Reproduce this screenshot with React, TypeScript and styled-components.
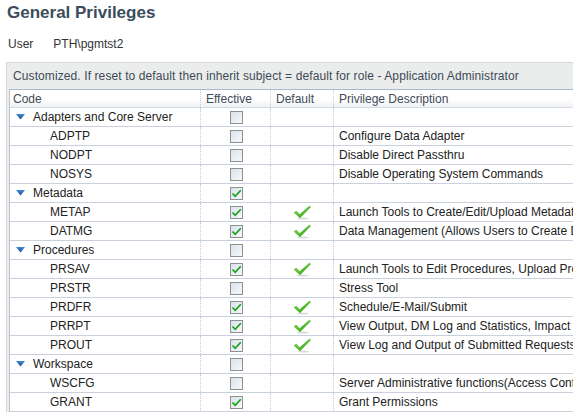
import styled, { createGlobalStyle } from "styled-components";

const GlobalStyle = createGlobalStyle`
  body {
    margin: 0;
    background: #ffffff;
    font-family: "Liberation Sans", Arial, sans-serif;
    color: #333333;
  }
`;

const Page = styled.div`
  width: 573px;
  height: 414px;
  overflow: hidden;
  position: relative;
`;

const Title = styled.h1`
  margin: 0;
  padding: 2px 0 0 7px;
  font-size: 17px;
  line-height: 22px;
  font-weight: bold;
  color: #3b4d5c;
`;

const UserLine = styled.div`
  display: flex;
  gap: 20px;
  margin-top: 13px;
  padding-left: 8px;
  font-size: 12px;
  line-height: 14px;
  color: #333;
`;

const Panel = styled.div`
  margin: 11px 0 0 6px;
  width: 620px;
  border: 1px solid #d3d7da;
  border-right: none;
  border-bottom: none;
  background: #ebedec;
  padding-left: 2px;
`;

const Caption = styled.div`
  height: 26px;
  line-height: 27px;
  padding-left: 4px;
  font-size: 12px;
  letter-spacing: 0.1px;
  color: #3d4a57;
`;

const Table = styled.div`
  background: #ffffff;
  border-top: 1px solid #a9b8cb;
  border-left: 1px solid #b9c3cf;
`;

const Row = styled.div<{ $head?: boolean }>`
  display: grid;
  grid-template-columns: 191px 70px 63px 1fr;
  height: ${(p) => (p.$head ? "17px" : "18px")};
  border-bottom: 1px solid ${(p) => (p.$head ? "#d5dbe3" : "#c8d1dc")};
  background: ${(p) =>
    p.$head ? "linear-gradient(#ffffff 0%, #ffffff 55%, #eef0f3 100%)" : "#fff"};
  font-size: 12px;
  color: ${(p) => (p.$head ? "#404b57" : "#222")};
`;

const Cell = styled.div<{ $center?: boolean; $indent?: number }>`
  display: flex;
  align-items: center;
  justify-content: ${(p) => (p.$center ? "center" : "flex-start")};
  padding-left: ${(p) => (p.$center ? 0 : p.$indent ?? 3)}px;
  border-right: 1px dotted #c4cbd8;
  white-space: nowrap;
  overflow: hidden;
  gap: 8px;
`;

const Box = styled.span`
  width: 11px;
  height: 11px;
  border: 1px solid #8e9090;
  background: linear-gradient(135deg, #d9e2ec 0%, #f7f9fb 100%);
  display: flex;
  align-items: center;
  justify-content: center;
  margin-left: 1px;
`;

const Arrow = () => (
  <svg width="9" height="6" viewBox="0 0 9 6">
    <defs>
      <linearGradient id="ag" x1="0" y1="0" x2="0" y2="1">
        <stop offset="0" stopColor="#3f8ad6" />
        <stop offset="1" stopColor="#1a4f99" />
      </linearGradient>
    </defs>
    <polygon points="0,0 9,0 4.5,5.5" fill="url(#ag)" />
  </svg>
);

const SmallCheck = () => (
  <svg width="11" height="11" viewBox="0 0 11 11">
    <path d="M1.5 5.5 L4.2 8.3 L9.8 2.2" fill="none" stroke="#19a019" strokeWidth="1.7" />
  </svg>
);

const BigCheck = () => (
  <svg width="19" height="15" viewBox="0 0 19 15">
    <defs>
      <linearGradient id="bg" x1="0" y1="0" x2="1" y2="1">
        <stop offset="0" stopColor="#8ee04a" />
        <stop offset="1" stopColor="#1e9e10" />
      </linearGradient>
    </defs>
    <ellipse cx="10" cy="13.6" rx="6" ry="1" fill="#d8dcd8" />
    <path
      d="M1 7.5 L3.2 6 L6.6 9.6 L16.5 1 L17.6 2 L7 13 Z"
      fill="url(#bg)"
      stroke="#3aa81a"
      strokeWidth="0.4"
    />
  </svg>
);

type Item = { code: string; eff: boolean; def: boolean; desc: string };
type Group = { name: string; eff: boolean; items: Item[] };

const groups: Group[] = [
  {
    name: "Adapters and Core Server",
    eff: false,
    items: [
      { code: "ADPTP", eff: false, def: false, desc: "Configure Data Adapter" },
      { code: "NODPT", eff: false, def: false, desc: "Disable Direct Passthru" },
      { code: "NOSYS", eff: false, def: false, desc: "Disable Operating System Commands" },
    ],
  },
  {
    name: "Metadata",
    eff: true,
    items: [
      { code: "METAP", eff: true, def: true, desc: "Launch Tools to Create/Edit/Upload Metadata" },
      { code: "DATMG", eff: true, def: true, desc: "Data Management (Allows Users to Create Data" },
    ],
  },
  {
    name: "Procedures",
    eff: false,
    items: [
      { code: "PRSAV", eff: true, def: true, desc: "Launch Tools to Edit Procedures, Upload Procedures" },
      { code: "PRSTR", eff: false, def: false, desc: "Stress Tool" },
      { code: "PRDFR", eff: true, def: true, desc: "Schedule/E-Mail/Submit" },
      { code: "PRRPT", eff: true, def: true, desc: "View Output, DM Log and Statistics, Impact Analysis" },
      { code: "PROUT", eff: true, def: true, desc: "View Log and Output of Submitted Requests" },
    ],
  },
  {
    name: "Workspace",
    eff: false,
    items: [
      { code: "WSCFG", eff: false, def: false, desc: "Server Administrative functions(Access Control)" },
      { code: "GRANT", eff: true, def: false, desc: "Grant Permissions" },
    ],
  },
];

function CheckBox({ checked }: { checked: boolean }) {
  return <Box>{checked && <SmallCheck />}</Box>;
}

export default function App() {
  return (
    <Page>
      <GlobalStyle />
      <Title>General Privileges</Title>
      <UserLine>
        <span>User</span>
        <span>PTH\pgmtst2</span>
      </UserLine>
      <Panel>
        <Caption>
          Customized. If reset to default then inherit subject = default for role - Application
          Administrator
        </Caption>
        <Table>
          <Row $head>
            <Cell>Code</Cell>
            <Cell $indent={5}>Effective</Cell>
            <Cell $indent={5}>Default</Cell>
            <Cell $indent={5}>Privilege Description</Cell>
          </Row>
          {groups.map((g) => (
            <div key={g.name}>
              <Row>
                <Cell $indent={6}>
                  <Arrow />
                  {g.name}
                </Cell>
                <Cell $center>
                  <CheckBox checked={g.eff} />
                </Cell>
                <Cell />
                <Cell />
              </Row>
              {g.items.map((it) => (
                <Row key={it.code}>
                  <Cell $indent={40}>{it.code}</Cell>
                  <Cell $center>
                    <CheckBox checked={it.eff} />
                  </Cell>
                  <Cell $center>{it.def && <BigCheck />}</Cell>
                  <Cell $indent={5}>{it.desc}</Cell>
                </Row>
              ))}
            </div>
          ))}
        </Table>
      </Panel>
    </Page>
  );
}
